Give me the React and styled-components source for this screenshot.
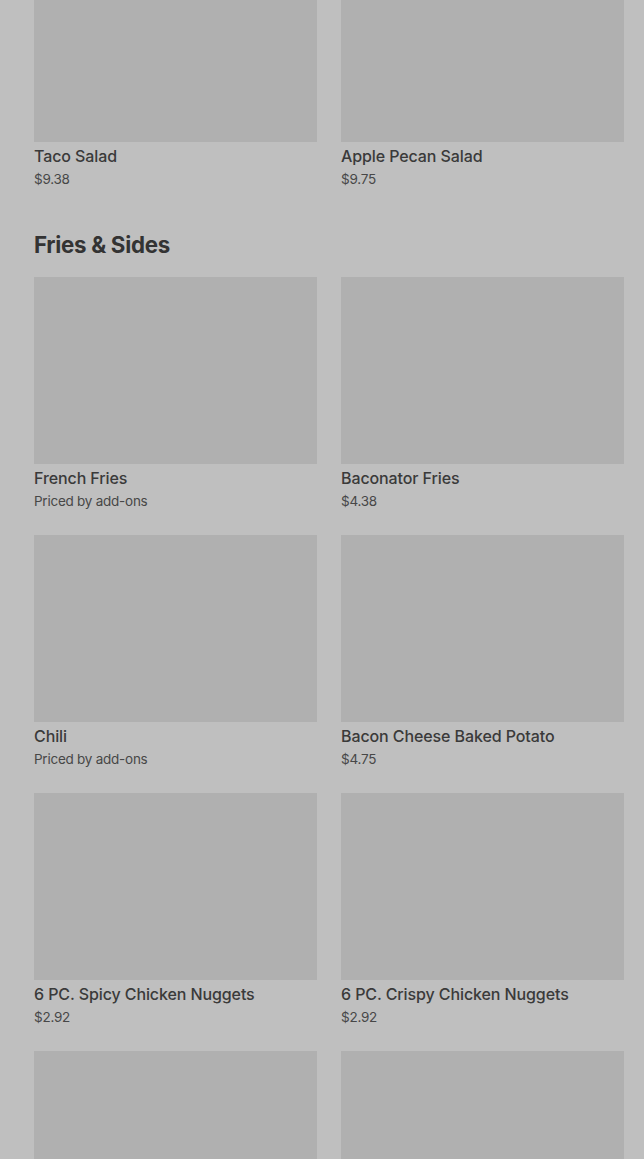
import React from "react";
import styled, { createGlobalStyle } from "styled-components";

const Global = createGlobalStyle`
  html, body { margin: 0; padding: 0; background: #bfbfbf; overflow: hidden; }
  body { font-family: Inter, "Noto Sans", sans-serif; }
`;

const Page = styled.div`
  padding: 0 20px 0 34px;
  margin-top: -45px;
  display: flex;
  flex-direction: column;
`;

const Section = styled.section`
  display: flex;
  flex-direction: column;
`;

const Heading = styled.h2`
  margin: 43px 0 18px;
  font-size: 22.3px;
  line-height: 28px;
  font-weight: 700;
  letter-spacing: -0.3px;
  color: #333333;
`;

const Grid = styled.div`
  display: grid;
  grid-template-columns: 283px 283px;
  column-gap: 24px;
  row-gap: 25px;
`;

const Card = styled.div`
  display: flex;
  flex-direction: column;
`;

const Thumb = styled.div`
  height: 187px;
  background: #b0b0b0;
`;

const Name = styled.div`
  margin-top: 2px;
  font-size: 16px;
  line-height: 24px;
  font-weight: 500;
  color: #3a3a3a;
  letter-spacing: -0.1px;
`;

const Price = styled.div`
  margin-top: 2px;
  font-size: 13.5px;
  line-height: 18px;
  font-weight: 400;
  color: #474747;
  letter-spacing: -0.25px;
`;

const Item = ({ name, price }) => (
  <Card>
    <Thumb />
    {name && <Name>{name}</Name>}
    {price && <Price>{price}</Price>}
  </Card>
);

const salads = [
  { name: "Taco Salad", price: "$9.38" },
  { name: "Apple Pecan Salad", price: "$9.75" },
];

const sides = [
  { name: "French Fries", price: "Priced by add-ons" },
  { name: "Baconator Fries", price: "$4.38" },
  { name: "Chili", price: "Priced by add-ons" },
  { name: "Bacon Cheese Baked Potato", price: "$4.75" },
  { name: "6 PC. Spicy Chicken Nuggets", price: "$2.92" },
  { name: "6 PC. Crispy Chicken Nuggets", price: "$2.92" },
  { name: "", price: "" },
  { name: "", price: "" },
];

export default function App() {
  return (
    <>
      <Global />
      <Page>
        <Section>
          <Grid>
            {salads.map((it, i) => (
              <Item key={i} {...it} />
            ))}
          </Grid>
        </Section>
        <Section>
          <Heading>Fries &amp; Sides</Heading>
          <Grid>
            {sides.map((it, i) => (
              <Item key={i} {...it} />
            ))}
          </Grid>
        </Section>
      </Page>
    </>
  );
}
